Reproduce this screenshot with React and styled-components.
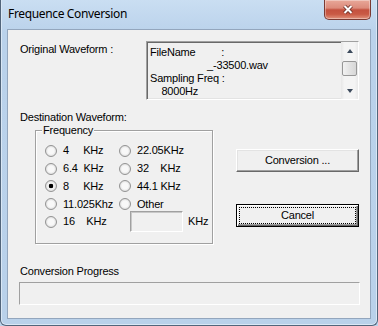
import styled, { createGlobalStyle } from "styled-components";

const GlobalStyle = createGlobalStyle`
  html, body {
    margin: 0;
    padding: 0;
  }
  body {
    background: #bcd4ec;
    font-family: "Liberation Sans", Arial, sans-serif;
  }
`;

const frequencies = [
  { label: "4     KHz" },
  { label: "22.05KHz" },
  { label: "6.4  KHz" },
  { label: "32    KHz" },
  { label: "8     KHz", checked: true },
  { label: "44.1 KHz" },
  { label: "11.025Khz" },
  { label: "Other" },
  { label: "16    KHz" },
];

const App = () => {
  return (
    <>
      <GlobalStyle />
      <Window>
        <TitleBar>
          <Title>Frequence Conversion</Title>
          <CloseButton>
            <svg width="14" height="11" viewBox="0 0 14 11">
              <path d="M3.5 2 L10.5 9 M10.5 2 L3.5 9" stroke="#6b2f27" strokeWidth="3.8" />
              <path d="M3.5 2 L10.5 9 M10.5 2 L3.5 9" stroke="#fff" strokeWidth="2" />
            </svg>
          </CloseButton>
        </TitleBar>
        <Client>
          <TopRow>
            <Label $width={126}>Original Waveform :</Label>
            <InfoBox>
              <InfoText>
                {"FileName         :\n                    _-33500.wav\nSampling Freq :\n    8000Hz"}
              </InfoText>
              <ScrollBar>
                <ArrowButton>
                  <Arrow $dir="up" />
                </ArrowButton>
                <Thumb />
                <Track />
                <ArrowButton>
                  <Arrow $dir="down" />
                </ArrowButton>
              </ScrollBar>
            </InfoBox>
          </TopRow>
          <Label $top={11}>Destination Waveform:</Label>
          <MidRow>
            <GroupBox>
              <Legend>Frequency</Legend>
              <RadioGrid>
                {frequencies.map((f) => (
                  <RadioItem key={f.label}>
                    <RadioCircle $checked={f.checked} />
                    {f.label}
                  </RadioItem>
                ))}
                <OtherRow>
                  <OtherInput />
                  KHz
                </OtherRow>
              </RadioGrid>
            </GroupBox>
            <ButtonCol>
              <Button>Conversion ...</Button>
              <Button $default>
                <Focus>Cancel</Focus>
              </Button>
            </ButtonCol>
          </MidRow>
          <Label $top={21}>Conversion Progress</Label>
          <Progress />
        </Client>
      </Window>
    </>
  );
};

export default App;

const Window = styled.div`
  box-sizing: border-box;
  width: 378px;
  height: 326px;
  display: flex;
  flex-direction: column;
  padding: 0 6px 6px;
  border: 1px solid #52657b;
  border-top: none;
  border-radius: 0 0 6px 6px;
  background: linear-gradient(180deg, #cadef2 0%, #bad2eb 10%, #b9d1ea 100%);
  box-shadow: inset 1px 0 0 #d9e7f5, inset -1px 0 0 #d9e7f5, inset 0 -1px 0 #d9e7f5;
`;

const TitleBar = styled.div`
  height: 29px;
  flex-shrink: 0;
  display: flex;
  justify-content: space-between;
  align-items: flex-start;
`;

const Title = styled.div`
  margin: 6px 0 0 1px;
  font-family: "Noto Sans", "Open Sans", sans-serif;
  font-size: 12px;
  line-height: 16px;
  letter-spacing: -0.35px;
  color: #000;
`;

const CloseButton = styled.div`
  box-sizing: border-box;
  width: 47px;
  height: 20px;
  display: flex;
  align-items: center;
  justify-content: center;
  border: 1px solid #7a3a33;
  border-top: none;
  border-radius: 0 0 5px 5px;
  background: linear-gradient(180deg, #e8a899 0%, #dc8b7b 42%, #c4513f 52%, #c95a45 75%, #e1927c 100%);
  box-shadow: inset 0 0 0 1px rgba(255, 255, 255, 0.35);
`;

const Client = styled.div`
  flex: 1;
  display: flex;
  flex-direction: column;
  padding: 11px 0 0 11px;
  background: #f0f0f0;
  border: 1px solid #93a6bd;
  font-family: "Liberation Sans", Arial, sans-serif;
  font-size: 11px;
  line-height: 13px;
  letter-spacing: -0.2px;
  color: #000;
`;

const TopRow = styled.div`
  display: flex;
  align-items: flex-start;
`;

const Label = styled.div`
  margin: ${(p) => p.$top || 0}px 0 0 1px;
  padding-top: ${(p) => (p.$width ? 2 : 0)}px;
  width: ${(p) => (p.$width ? `${p.$width}px` : "auto")};
  white-space: pre;
`;

const InfoBox = styled.div`
  box-sizing: border-box;
  width: 213px;
  height: 59px;
  display: flex;
  border: 1px solid;
  border-color: #a0a0a0 #fff #fff #a0a0a0;
  box-shadow: inset 1px 1px 0 #696969, inset -1px -1px 0 #e3e3e3;
  background: #f0f0f0;
`;

const InfoText = styled.div`
  flex: 1;
  padding: 4px 0 0 3px;
  white-space: pre;
  overflow: hidden;
`;

const ScrollBar = styled.div`
  width: 17px;
  display: flex;
  flex-direction: column;
  align-items: center;
  background: linear-gradient(90deg, #e7e7e7, #f4f4f4 20%, #f4f4f4 80%, #e9e9e9);
`;

const ArrowButton = styled.div`
  width: 17px;
  height: 17px;
  flex-shrink: 0;
  display: flex;
  align-items: center;
  justify-content: center;
`;

const Arrow = styled.span`
  width: 0;
  height: 0;
  border-left: 3.5px solid transparent;
  border-right: 3.5px solid transparent;
  ${(p) =>
    p.$dir === "up"
      ? "border-bottom: 4px solid #3c4a5c;"
      : "border-top: 4px solid #3c4a5c;"}
`;

const Thumb = styled.div`
  box-sizing: border-box;
  width: 15px;
  height: 15px;
  margin-top: 2px;
  border: 1px solid #979797;
  border-radius: 2px;
  background: linear-gradient(90deg, #f2f2f2, #e3e3e3 50%, #d7d7d7);
`;

const Track = styled.div`
  flex: 1;
`;

const MidRow = styled.div`
  display: flex;
  align-items: flex-start;
  margin-top: 6px;
`;

const GroupBox = styled.div`
  position: relative;
  box-sizing: border-box;
  width: 178px;
  height: 114px;
  margin-left: 16px;
  border: 1px solid #a0a0a0;
  box-shadow: inset 1px 1px 0 #fff, 1px 1px 0 #fff;
`;

const Legend = styled.span`
  position: absolute;
  top: -7px;
  left: 6px;
  padding: 0 1px;
  background: #f0f0f0;
`;

const RadioGrid = styled.div`
  display: grid;
  grid-template-columns: 74px 1fr;
  grid-auto-rows: 17.75px;
  align-items: center;
  padding: 11px 0 0 9px;
`;

const RadioItem = styled.div`
  display: flex;
  align-items: center;
  gap: 6px;
  white-space: pre;
`;

const RadioCircle = styled.span`
  box-sizing: border-box;
  width: 12px;
  height: 12px;
  flex-shrink: 0;
  border-radius: 50%;
  border: 1px solid #939393;
  background: ${(p) =>
    p.$checked
      ? "radial-gradient(circle, #000 0 2px, #f6f6f6 2.6px 3px, #d4d4d4 6px)"
      : "radial-gradient(circle, #f8f8f8 0 3px, #d4d4d4 6px)"};
`;

const OtherRow = styled.div`
  display: flex;
  align-items: center;
  padding-left: 11px;
`;

const OtherInput = styled.div`
  box-sizing: border-box;
  width: 53px;
  height: 21px;
  margin: -2px 5px -2px 0;
  border: 1px solid;
  border-color: #a0a0a0 #fff #fff #a0a0a0;
  box-shadow: inset 1px 1px 0 #c8c8c8;
  background: #f0f0f0;
`;

const ButtonCol = styled.div`
  display: flex;
  flex-direction: column;
  gap: 32px;
  margin: 19px 0 0 23px;
`;

const Button = styled.div`
  box-sizing: border-box;
  width: 123px;
  height: 23px;
  display: flex;
  align-items: center;
  justify-content: center;
  padding: ${(p) => (p.$default ? "3px" : "0")};
  background: #f0f0f0;
  border: 1px solid;
  border-color: ${(p) => (p.$default ? "#000" : "#fff #696969 #696969 #fff")};
  box-shadow: ${(p) =>
    p.$default
      ? "inset 1px 1px 0 #fff, inset -1px -1px 0 #696969, inset -2px -2px 0 #a0a0a0"
      : "inset -1px -1px 0 #a0a0a0, inset 1px 1px 0 #e3e3e3"};
`;

const Focus = styled.span`
  flex: 1;
  align-self: stretch;
  display: flex;
  align-items: center;
  justify-content: center;
  outline: 1px dotted #000;
`;

const Progress = styled.div`
  box-sizing: border-box;
  width: 341px;
  height: 23px;
  margin-top: 4px;
  border: 1px solid;
  border-color: #a0a0a0 #fff #fff #a0a0a0;
`;
